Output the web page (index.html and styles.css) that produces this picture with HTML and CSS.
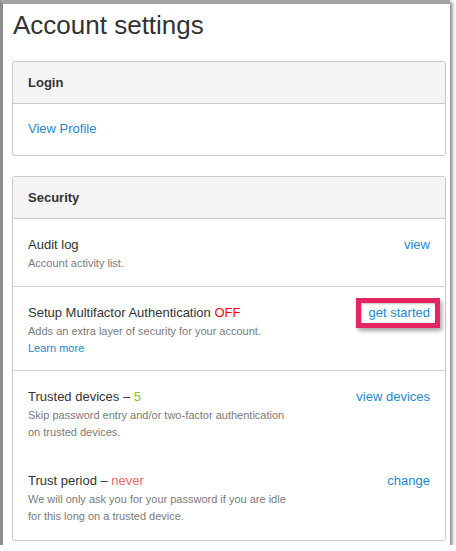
FILE: index.html
```html
<!DOCTYPE html>
<html lang="en">
<head>
    <meta charset="UTF-8">
    <meta name="viewport" content="width=device-width, initial-scale=1.0">
    <title>Account settings</title>
    <link rel="stylesheet" href="styles.css">
</head>
<body>
    <div class="window">
        <h1>Account settings</h1>

        <div class="panel">
            <div class="panel-heading">Login</div>
            <div class="panel-body">
                <a href="#">View Profile</a>
            </div>
        </div>

        <div class="panel">
            <div class="panel-heading">Security</div>

            <div class="setting">
                <div class="setting-text">
                    <div class="setting-title">Audit log</div>
                    <div class="setting-desc">Account activity list.</div>
                </div>
                <a href="#" class="setting-action">view</a>
            </div>

            <div class="setting">
                <div class="setting-text">
                    <div class="setting-title">Setup Multifactor Authentication <span class="status-off">OFF</span></div>
                    <div class="setting-desc">Adds an extra layer of security for your account.</div>
                    <a href="#" class="setting-desc learn">Learn more</a>
                </div>
                <a href="#" class="setting-action highlight">get started</a>
            </div>

            <div class="setting no-line">
                <div class="setting-text">
                    <div class="setting-title">Trusted devices &ndash; <span class="count">5</span></div>
                    <div class="setting-desc">Skip password entry and/or two-factor authentication<br>on trusted devices.</div>
                </div>
                <a href="#" class="setting-action">view devices</a>
            </div>

            <div class="setting">
                <div class="setting-text">
                    <div class="setting-title">Trust period &ndash; <span class="never">never</span></div>
                    <div class="setting-desc">We will only ask you for your password if you are idle<br>for this long on a trusted device.</div>
                </div>
                <a href="#" class="setting-action">change</a>
            </div>
        </div>
    </div>
</body>
</html>
```

FILE: styles.css
```css
body {
    margin: 0;
    background: #fff;
    font-family: "Liberation Sans", Arial, sans-serif;
    color: #333;
}
.window {
    width: 434px;
    height: 535px;
    padding: 6px 4px 0 9px;
    border-left: 3px solid #8c8c8c;
    border-top: 4px solid #a3a3a3;
    background: #fff;
    box-shadow: 2px 2px 4px rgba(0, 0, 0, 0.55);
    overflow: hidden;
}
h1 {
    margin: 0 0 21px 1px;
    font-size: 26px;
    font-weight: normal;
    line-height: 30px;
    color: #333;
}
a {
    color: #2489cf;
    text-decoration: none;
}
.panel {
    border: 1px solid #c9c9c9;
    border-radius: 3px;
    margin-bottom: 20px;
    font-size: 13px;
    line-height: 18px;
}
.panel-heading {
    background-color: #f4f4f4;
    border-bottom: 1px solid #c9c9c9;
    border-radius: 3px 3px 0 0;
    padding: 12px 15px 11px;
    font-weight: bold;
}
.panel-body {
    padding: 16px 15px 17px;
}
.setting {
    display: flex;
    justify-content: space-between;
    align-items: flex-start;
    padding: 17px 15px 14px;
    border-bottom: 1px solid #d2d2d2;
}
.setting:last-child {
    border-bottom: none;
    padding-bottom: 15px;
}
.setting.no-line {
    border-bottom: none;
    padding-bottom: 14px;
}
.setting-text {
    display: flex;
    flex-direction: column;
}
.setting-desc {
    margin-top: 1px;
    font-size: 11px;
    line-height: 17px;
    color: #7a7a7a;
}
.setting-desc.learn {
    margin-top: 0;
    line-height: 16px;
    color: #2489cf;
}
.setting-action {
    position: relative;
    white-space: nowrap;
}
.highlight::after {
    content: "";
    position: absolute;
    left: -13px;
    right: -10px;
    top: -6px;
    bottom: -6px;
    border: 5px solid #e4255f;
    box-shadow: 2px 3px 4px rgba(0, 0, 0, 0.35), inset 1px 1px 2px rgba(0, 0, 0, 0.25);
}
.status-off {
    color: #ff0000;
}
.count {
    color: #86bf2b;
}
.never {
    color: #ea6a6a;
}
```
